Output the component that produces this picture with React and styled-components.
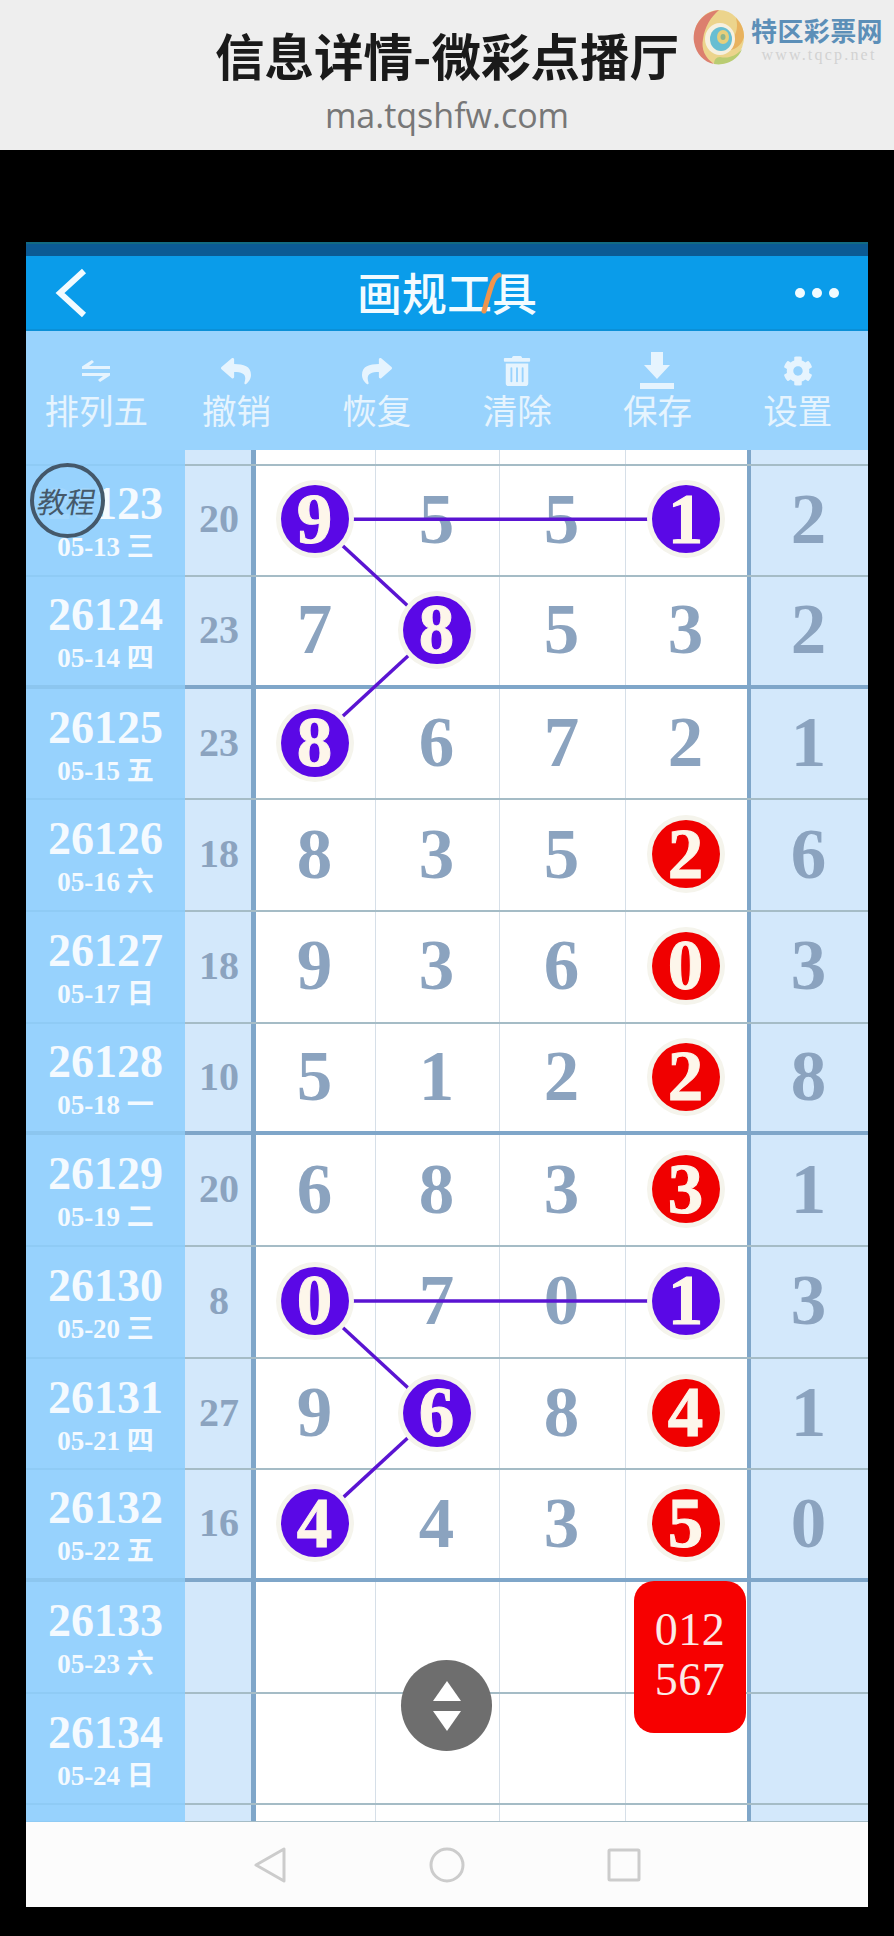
import React from 'react';
import styled, { createGlobalStyle } from 'styled-components';
import { FaReply, FaShare, FaTrashAlt, FaCog } from 'react-icons/fa';

const CJK = '"Noto Sans CJK SC", sans-serif';
const SERIF = '"Liberation Serif", "Noto Sans CJK SC", serif';
const ROW_H = 111.67;
const TOP_H = 15.5;
const COL_X = [288, 409, 535, 659];

const GlobalStyle = createGlobalStyle`
  html, body { margin: 0; padding: 0; background: #000; }
  * { box-sizing: border-box; }
`;

const Page = styled.div`
  width: 894px;
  height: 1936px;
  background: #000;
  overflow: hidden;
`;

const Banner = styled.header`
  position: relative;
  height: 150px;
  background: #eeeeee;
  padding-top: 27px;
  text-align: center;
`;

const BannerTitle = styled.h1`
  margin: 0;
  font: 700 49.5px/56px ${CJK};
  color: #1a1a1a;
`;

const BannerUrl = styled.div`
  margin-top: 10px;
  font: 400 34px/44px "Open Sans", sans-serif;
  color: #777;
`;

const Logo = styled.div`
  position: absolute;
  top: 8px;
  left: 692px;
  display: flex;
  gap: 5px;
`;

const LogoText = styled.div`
  padding-top: 8px;
`;

const LogoName = styled.div`
  font: 700 26px/28px ${CJK};
  letter-spacing: 0.4px;
  color: #5c8fb8;
  white-space: nowrap;
`;

const LogoUrl = styled.div`
  margin-top: 3px;
  padding-left: 4px;
  font: 400 16px/16px "Liberation Serif", serif;
  letter-spacing: 2.2px;
  color: #d2d2d2;
  white-space: nowrap;
`;

const Phone = styled.div`
  margin: 92px 26px 0;
  width: 842px;
`;

const StatusStrip = styled.div`
  height: 14px;
  background: #0b5a94;
  border-top: 2px solid #126a82;
`;

const NavBar = styled.div`
  height: 75px;
  background: #0a9cea;
  border-bottom: 2px solid #0a90d8;
  display: grid;
  grid-template-columns: 1fr auto 1fr;
  align-items: center;
  padding: 0 29px;
  color: #fff;
`;

const NavTitle = styled.div`
  position: relative;
  margin-top: -2px;
  font: 500 45px/56px ${CJK};
  color: #f2fbff;
`;

const Scribble = styled.svg`
  position: absolute;
  left: 122px;
  top: 7px;
`;

const Dots = styled.div`
  justify-self: end;
  display: flex;
  gap: 7px;
`;

const Dot = styled.span`
  width: 10px;
  height: 10px;
  border-radius: 50%;
  background: #f2fbff;
`;

const Toolbar = styled.div`
  height: 119px;
  background: #99d3fd;
  display: grid;
  grid-template-columns: repeat(6, 1fr);
`;

const Tool = styled.div`
  display: flex;
  flex-direction: column;
  align-items: center;
  padding-top: 23px;
  color: #e6f4fe;
`;

const ToolIcon = styled.div`
  height: 34px;
  display: flex;
  align-items: center;
  justify-content: center;
  font-size: 30px;
`;

const ToolLabel = styled.div`
  font: 400 34.5px/42px ${CJK};
`;

const Board = styled.div`
  position: relative;
  height: 1372px;
  overflow: hidden;
  background: #fff;
`;

const Row = styled.div`
  display: grid;
  grid-template-columns: 159px 66px 124px 124px 126px 122px 121px;
  height: ${(p) => p.$h}px;
  border-bottom: ${(p) => (p.$thick ? '4px solid #7fa6c9' : '2px solid #a5bcc6')};
`;

const IssueCell = styled.div`
  background: #97d2fd;
  margin-bottom: ${(p) => (p.$thick ? '-4px' : '-2px')};
  border-bottom: ${(p) => (p.$thick ? '4px solid #8cc6ef' : '2px solid #8fcbf5')};
  padding-top: 2px;
  display: flex;
  flex-direction: column;
  align-items: center;
  justify-content: center;
  color: #f4faff;
  font-family: ${SERIF};
  font-weight: 700;
`;

const IssueNo = styled.div`
  font-size: 46px;
  line-height: 52px;
`;

const IssueDate = styled.div`
  font-size: 27px;
  line-height: 34px;
  white-space: nowrap;
`;

const SumCell = styled.div`
  background: #d3e8fb;
  padding: 0 0 2px 2px;
  display: flex;
  align-items: center;
  justify-content: center;
  font: 700 40px/1 ${SERIF};
  color: #8ba3bf;
`;

const NumCell = styled.div`
  display: flex;
  align-items: center;
  justify-content: center;
  background: #fff;
  padding: 0 2px 2px 0;
  border-left: ${(p) => (p.$first ? '5px solid #7fa6c9' : '1px solid #d6dfe8')};
  font: 700 71px/1 ${SERIF};
  color: #8ba3bf;
`;

const EndCell = styled(NumCell)`
  background: #d3e8fb;
  border-left: 4px solid #7fa6c9;
`;

const Ball = styled.div`
  position: relative;
  z-index: 2;
  width: 68px;
  height: 68px;
  border-radius: 50%;
  display: flex;
  align-items: center;
  justify-content: center;
  background: ${(p) => (p.$red ? '#f00000' : '#5a08e6')};
  box-shadow: 0 0 0 5px #f5f4ec;
  color: #fdf6ea;
  -webkit-text-stroke: 1px #fdf6ea;
`;

const Links = styled.svg`
  position: absolute;
  left: 0;
  top: 0;
  z-index: 1;
`;

const Tutorial = styled.div`
  position: absolute;
  z-index: 3;
  left: 4px;
  top: 13px;
  width: 75px;
  height: 75px;
  border-radius: 50%;
  border: 4px solid #44586a;
  background: rgba(151, 210, 253, 0.88);
  display: flex;
  align-items: center;
  justify-content: center;
  font: 400 29px/1 ${CJK};
  color: #45596a;
`;

const TutorialText = styled.span`
  transform: skewX(-10deg);
  white-space: nowrap;
`;

const Forecast = styled.div`
  position: absolute;
  z-index: 3;
  left: 608px;
  top: 1131px;
  width: 112px;
  height: 152px;
  border-radius: 20px;
  background: #f70000;
  padding-top: 24px;
  text-align: center;
  font: 400 46px/50px ${SERIF};
  letter-spacing: 0.5px;
  color: #fbeae6;
`;

const Scroller = styled.div`
  position: absolute;
  z-index: 3;
  left: 375px;
  top: 1210px;
  width: 91px;
  height: 91px;
  border-radius: 50%;
  background: #6e6e6e;
  display: flex;
  align-items: center;
  justify-content: center;
`;

const SystemBar = styled.div`
  height: 85px;
  background: #fcfcfc;
  display: flex;
  justify-content: center;
  align-items: center;
  gap: 142px;
`;

const rows = [
  ['26123', '05-13 三', '20', [9, 5, 5, 1, 2], { 0: 'p', 3: 'p' }],
  ['26124', '05-14 四', '23', [7, 8, 5, 3, 2], { 1: 'p' }],
  ['26125', '05-15 五', '23', [8, 6, 7, 2, 1], { 0: 'p' }],
  ['26126', '05-16 六', '18', [8, 3, 5, 2, 6], { 3: 'r' }],
  ['26127', '05-17 日', '18', [9, 3, 6, 0, 3], { 3: 'r' }],
  ['26128', '05-18 一', '10', [5, 1, 2, 2, 8], { 3: 'r' }],
  ['26129', '05-19 二', '20', [6, 8, 3, 3, 1], { 3: 'r' }],
  ['26130', '05-20 三', '8', [0, 7, 0, 1, 3], { 0: 'p', 3: 'p' }],
  ['26131', '05-21 四', '27', [9, 6, 8, 4, 1], { 1: 'p', 3: 'r' }],
  ['26132', '05-22 五', '16', [4, 4, 3, 5, 0], { 0: 'p', 3: 'r' }],
  ['26133', '05-23 六', '', ['', '', '', '', ''], {}],
  ['26134', '05-24 日', '', ['', '', '', '', ''], {}],
];

// row/column pairs joined by the purple rule lines
const links = [
  [0, 0, 0, 3], [0, 0, 1, 1], [1, 1, 2, 0],
  [7, 0, 7, 3], [7, 0, 8, 1], [8, 1, 9, 0],
];

const thickAfter = [1, 5, 9];
const rowY = (i) => TOP_H + ROW_H * (i + 0.5) - 2;

function Swirl() {
  return (
    <svg width="54" height="58" viewBox="0 0 54 58">
      <ellipse cx="27" cy="29" rx="25" ry="27" fill="#ecd48c" />
      <path d="M27 2C10 4 0 18 2 34c2 12 10 20 20 22-9-6-13-15-11-25C13 18 19 9 27 2z" fill="#dc7f6e" />
      <path d="M22 56c12 2 24-4 28-15-6 7-14 10-22 8-4 0-6 3-6 7z" fill="#b9cc72" />
      <path d="M52 29c0-8-3-14-8-19 2 8 1 14-3 20-2 6-7 10-12 12 10 2 20-2 23-13z" fill="#e8b25f" />
      <ellipse cx="28" cy="31" rx="15" ry="16" fill="#f6f0df" />
      <ellipse cx="29" cy="31" rx="11" ry="12" fill="#68bed2" />
      <ellipse cx="31" cy="29" rx="6" ry="7" fill="#e6cf7c" />
      <ellipse cx="31" cy="29" rx="2.5" ry="3" fill="#8fb58c" />
    </svg>
  );
}

function EmptyRow({ h }) {
  return (
    <Row $h={h}>
      <IssueCell />
      <SumCell />
      <NumCell $first />
      <NumCell />
      <NumCell />
      <NumCell />
      <EndCell />
    </Row>
  );
}

function DrawBoard() {
  return (
    <Board>
      <EmptyRow h={TOP_H} />
      {rows.map(([no, date, sum, nums, marks], i) => (
        <Row key={no} $h={ROW_H} $thick={thickAfter.includes(i)}>
          <IssueCell $thick={thickAfter.includes(i)}>
            <IssueNo>{no}</IssueNo>
            <IssueDate>{date}</IssueDate>
          </IssueCell>
          <SumCell>{sum}</SumCell>
          {nums.slice(0, 4).map((n, c) => (
            <NumCell key={c} $first={c === 0}>
              {marks[c] ? <Ball $red={marks[c] === 'r'}>{n}</Ball> : n}
            </NumCell>
          ))}
          <EndCell>{nums[4]}</EndCell>
        </Row>
      ))}
      <EmptyRow h={18} />
      <Links width="842" height="1372">
        {links.map(([r1, c1, r2, c2], i) => (
          <line
            key={i}
            x1={COL_X[c1]}
            y1={rowY(r1)}
            x2={COL_X[c2]}
            y2={rowY(r2)}
            stroke="#5a14d2"
            strokeWidth="3.5"
          />
        ))}
      </Links>
      <Tutorial>
        <TutorialText>教程</TutorialText>
      </Tutorial>
      <Forecast>
        012
        <br />
        567
      </Forecast>
      <Scroller>
        <svg width="30" height="52" viewBox="0 0 30 52" fill="#fff">
          <path d="M15 1 29 21H1z" />
          <path d="M1 31h28L15 51z" />
        </svg>
      </Scroller>
    </Board>
  );
}

export default function App() {
  return (
    <Page>
      <GlobalStyle />
      <Banner>
        <BannerTitle>信息详情-微彩点播厅</BannerTitle>
        <BannerUrl>ma.tqshfw.com</BannerUrl>
        <Logo>
          <Swirl />
          <LogoText>
            <LogoName>特区彩票网</LogoName>
            <LogoUrl>www.tqcp.net</LogoUrl>
          </LogoText>
        </Logo>
      </Banner>
      <Phone>
        <StatusStrip />
        <NavBar>
          <svg width="32" height="50" viewBox="0 0 32 50" fill="none" stroke="#f2fbff" strokeWidth="6">
            <path d="M29 3 5 25l24 22" />
          </svg>
          <NavTitle>
            画规工具
            <Scribble width="24" height="44" viewBox="0 0 24 44" fill="none" stroke="#f0944c" strokeWidth="5" strokeLinecap="round">
              <path d="M20 4c-6 2-8 12-15 36" />
            </Scribble>
          </NavTitle>
          <Dots>
            <Dot />
            <Dot />
            <Dot />
          </Dots>
        </NavBar>
        <Toolbar>
          <Tool>
            <ToolIcon>
              <svg width="30" height="26" viewBox="0 0 30 26" fill="#e6f4fe">
                <path d="M11 2 13 4 8 8h21v3H1V8.500zM19 24l-2-2 5-4H1v-3h28v2.500z" />
              </svg>
            </ToolIcon>
            <ToolLabel>排列五</ToolLabel>
          </Tool>
          <Tool>
            <ToolIcon><FaReply /></ToolIcon>
            <ToolLabel>撤销</ToolLabel>
          </Tool>
          <Tool>
            <ToolIcon><FaShare /></ToolIcon>
            <ToolLabel>恢复</ToolLabel>
          </Tool>
          <Tool>
            <ToolIcon><FaTrashAlt /></ToolIcon>
            <ToolLabel>清除</ToolLabel>
          </Tool>
          <Tool>
            <ToolIcon>
              <svg width="36" height="38" viewBox="0 0 36 38" fill="#e6f4fe">
                <path d="M12 0h12v13h7L18 27 5 13h7zM1 31h34v6H1z" />
              </svg>
            </ToolIcon>
            <ToolLabel>保存</ToolLabel>
          </Tool>
          <Tool>
            <ToolIcon><FaCog /></ToolIcon>
            <ToolLabel>设置</ToolLabel>
          </Tool>
        </Toolbar>
        <DrawBoard />
        <SystemBar>
          <svg width="34" height="38" viewBox="0 0 34 38" fill="none" stroke="#cccccc" strokeWidth="3" strokeLinejoin="round">
            <path d="M31 3v32L3 19z" />
          </svg>
          <svg width="36" height="36" viewBox="0 0 36 36" fill="none" stroke="#cccccc" strokeWidth="3">
            <circle cx="18" cy="18" r="16" />
          </svg>
          <svg width="34" height="34" viewBox="0 0 34 34" fill="none" stroke="#cccccc" strokeWidth="3">
            <rect x="2" y="2" width="30" height="30" rx="1" />
          </svg>
        </SystemBar>
      </Phone>
    </Page>
  );
}
